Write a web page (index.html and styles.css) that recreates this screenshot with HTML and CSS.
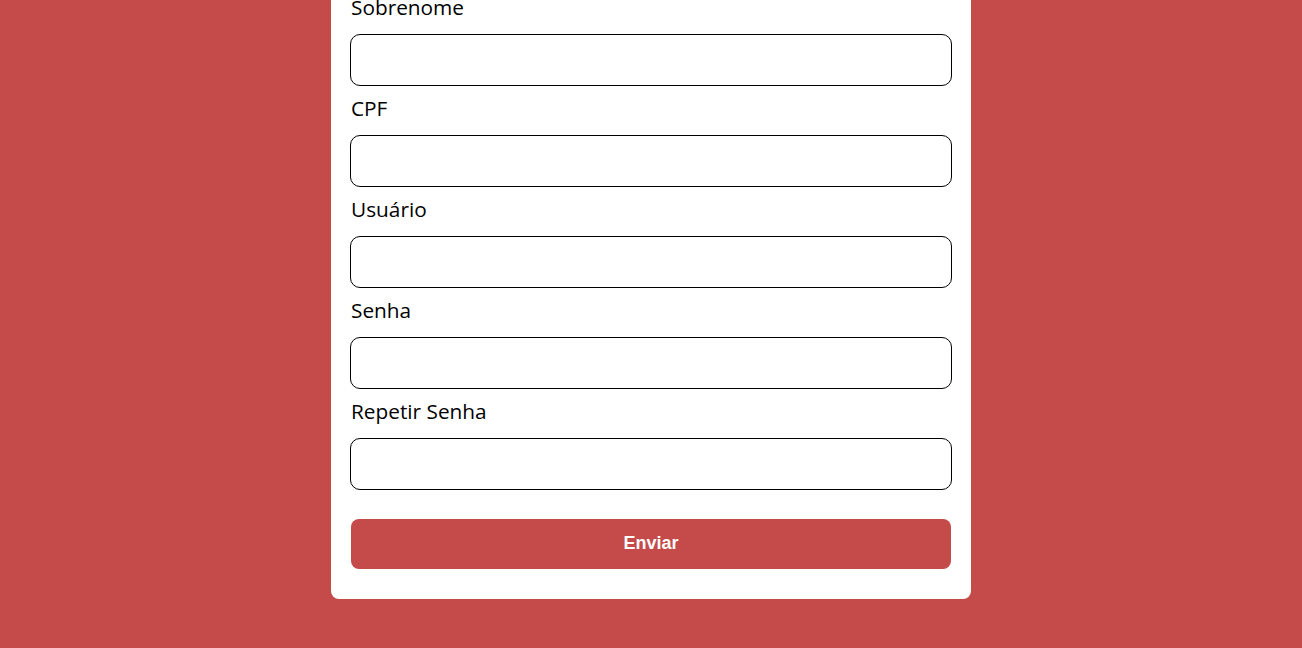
FILE: index.html
```html
<!DOCTYPE html>
<html lang="pt-BR">
<head>
<meta charset="utf-8">
<title>Cadastro</title>
<link rel="stylesheet" href="styles.css">
</head>
<body>
<main class="page">
  <form class="card">
    <div class="field">
      <label class="label" for="sobrenome">Sobrenome</label>
      <input class="input" id="sobrenome" type="text">
    </div>
    <div class="field">
      <label class="label" for="cpf">CPF</label>
      <input class="input" id="cpf" type="text">
    </div>
    <div class="field">
      <label class="label" for="usuario">Usuário</label>
      <input class="input" id="usuario" type="text">
    </div>
    <div class="field">
      <label class="label" for="senha">Senha</label>
      <input class="input" id="senha" type="password">
    </div>
    <div class="field">
      <label class="label" for="senha2">Repetir Senha</label>
      <input class="input" id="senha2" type="password">
    </div>
    <button class="submit" type="button">Enviar</button>
  </form>
</main>
</body>
</html>
```
FILE: styles.css
```css
html, body {
  margin: 0;
  padding: 0;
}
body {
  background: #c54a4a;
  font-family: "Open Sans", "Liberation Sans", sans-serif;
  height: 648px;
  overflow: hidden;
}
.page {
  display: flex;
  justify-content: center;
}
.card {
  box-sizing: border-box;
  width: 640px;
  margin-top: -27.5px;
  background: #ffffff;
  border-radius: 0 0 8px 8px;
  padding: 20px 19px 30px;
  display: flex;
  flex-direction: column;
}
.field {
  display: flex;
  flex-direction: column;
  margin-bottom: 8px;
}
.label {
  font-size: 20.8px;
  line-height: normal;
  color: #000000;
  padding-left: 1px;
  margin-bottom: 13px;
}
.input {
  box-sizing: border-box;
  width: 100%;
  height: 52px;
  border: 1px solid #000000;
  border-radius: 10px;
  background: #ffffff;
  margin: 0;
  padding: 0 12px;
  font-size: 18px;
  font-family: inherit;
}
.submit {
  margin: 21px 1px 0;
  height: 50px;
  border: none;
  border-radius: 8px;
  background: #c54a4a;
  color: #ffffff;
  font-family: "Liberation Sans", Arial, sans-serif;
  font-weight: bold;
  font-size: 18px;
  cursor: pointer;
}
```
